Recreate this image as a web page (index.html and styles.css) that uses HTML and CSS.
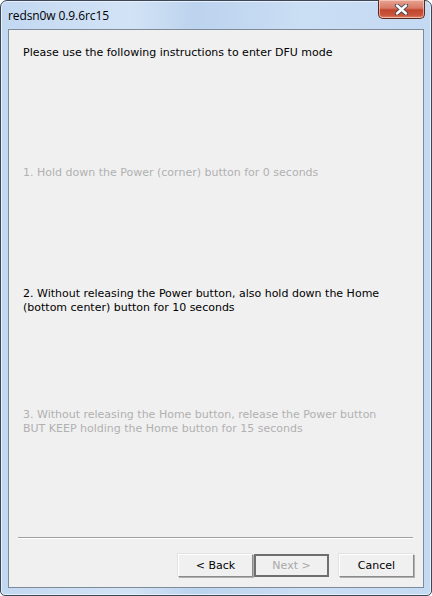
FILE: index.html
```html
<!DOCTYPE html>
<html lang="en">
<head>
    <meta charset="utf-8">
    <title>redsn0w 0.9.6rc15</title>
    <link rel="stylesheet" href="styles.css">
</head>
<body>
    <div class="window">
        <div class="titlebar">
            <span class="title">redsn0w 0.9.6rc15</span>
            <button class="close-btn" aria-label="Close">
                <svg width="15" height="11" viewBox="0 0 15 11">
                    <path d="M3 1.5 L12 9.5 M12 1.5 L3 9.5" stroke="#3c4654" stroke-width="4.2" stroke-linecap="round"/>
                    <path d="M3 1.5 L12 9.5 M12 1.5 L3 9.5" stroke="#fff" stroke-width="2.4" stroke-linecap="round"/>
                </svg>
            </button>
        </div>
        <div class="client">
            <div class="steps">
                <p class="intro">Please use the following instructions to enter DFU mode</p>
                <p class="step step-1 disabled">1. Hold down the Power (corner) button for 0 seconds</p>
                <p class="step step-2">2. Without releasing the Power button, also hold down the Home<br>(bottom center) button for 10 seconds</p>
                <p class="step step-3 disabled">3. Without releasing the Home button, release the Power button<br>BUT KEEP holding the Home button for 15 seconds</p>
            </div>
            <div class="separator"></div>
            <div class="actions">
                <button class="btn">&lt; Back</button>
                <button class="btn btn-default" disabled>Next &gt;</button>
                <button class="btn btn-cancel">Cancel</button>
            </div>
        </div>
    </div>
</body>
</html>
```

FILE: styles.css
```css
html, body {
    margin: 0;
    height: 100%;
    background: #fff;
}
.window {
    box-sizing: border-box;
    width: 432px;
    height: 596px;
    border: 1px solid #3b4656;
    border-radius: 7px 7px 5px 5px;
    background: linear-gradient(90deg, #c2d8f1 0%, #d3e3f6 30%, #bcd3ee 45%, #cadef4 70%, #c4daf3 100%);
    display: flex;
    flex-direction: column;
    box-shadow: inset 0 0 0 1px #e8f1fb;
}
.titlebar {
    height: 28px;
    display: flex;
    align-items: flex-start;
    justify-content: space-between;
    padding-left: 7px;
}
.title {
    font-family: "Open Sans", "DejaVu Sans", sans-serif;
    font-size: 12px;
    color: #000;
    margin-top: 6px;
    letter-spacing: -0.1px;
}
.close-btn {
    width: 47px;
    height: 19px;
    margin-top: -1px;
    margin-right: 6px;
    border: 1px solid #5a2a22;
    border-top: none;
    border-radius: 0 0 5px 5px;
    background: linear-gradient(#e8a493 0%, #d77a66 45%, #c2462e 55%, #c9553c 85%, #de8a6c 100%);
    box-shadow: inset 0 0 0 1px rgba(255, 220, 210, 0.6);
    padding: 0;
    display: flex;
    align-items: center;
    justify-content: center;
}
.client {
    flex: 1;
    margin: 0 7px 7px 7px;
    border: 1px solid #7d8a99;
    background: #f0f0f0;
    display: flex;
    flex-direction: column;
    font-family: "DejaVu Sans", sans-serif;
    font-size: 11px;
    color: #000;
}
.steps {
    flex: 1;
    padding: 16px 14px 0 14px;
}
.steps p {
    margin: 0;
    line-height: 14px;
}
.step-1 {
    margin-top: 106px !important;
}
.step-2 {
    margin-top: 107px !important;
}
.step-3 {
    margin-top: 93px !important;
}
.disabled {
    color: #b0b0b0;
}
.separator {
    margin: 0 10px 0 9px;
    border-top: 1px solid #a0a0a0;
    border-bottom: 1px solid #fff;
}
.actions {
    display: flex;
    justify-content: flex-end;
    padding: 15px 9px 10px 0;
}
.btn {
    box-sizing: border-box;
    width: 75px;
    height: 23px;
    font-family: "DejaVu Sans", sans-serif;
    font-size: 11px;
    color: #000;
    background: #f0f0f0;
    border: 1px solid;
    border-color: #fff #8a8a8a #8a8a8a #fff;
    box-shadow: 1px 1px 0 #b0b0b0, -1px -1px 0 #e2e2e2;
    padding: 0;
}
.btn-default {
    border: 2px solid #6e6e6e;
    box-shadow: none;
    color: #a8a8a8;
    margin-left: 1px;
}
.btn-cancel {
    margin-left: 10px;
}
```
